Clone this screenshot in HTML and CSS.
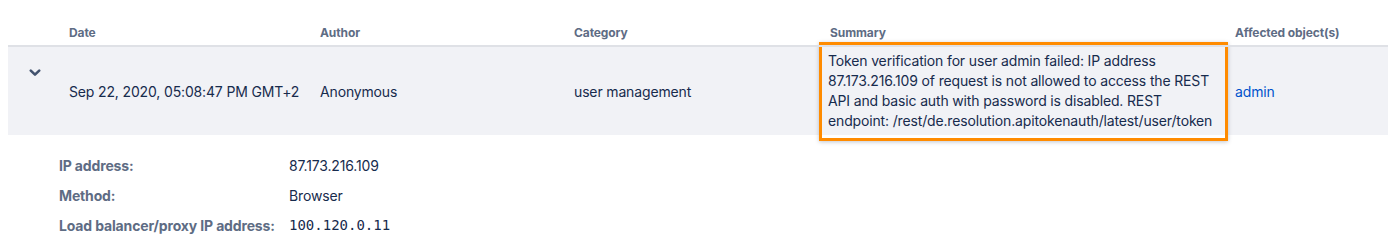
FILE: index.html
```html
<!DOCTYPE html>
<html lang="en">
<head>
  <meta charset="UTF-8" />
  <title>Audit log</title>
  <link rel="stylesheet" href="styles.css">
</head>
<body>
  <table class="audit-table">
    <colgroup>
      <col class="col-toggle">
      <col class="col-date">
      <col class="col-author">
      <col class="col-category">
      <col class="col-summary">
      <col class="col-objects">
    </colgroup>
    <thead>
      <tr>
        <th></th>
        <th>Date</th>
        <th>Author</th>
        <th>Category</th>
        <th>Summary</th>
        <th>Affected object(s)</th>
      </tr>
    </thead>
    <tbody>
      <tr class="entry">
        <td class="toggle">
          <svg width="12" height="8" viewBox="0 0 12 8" aria-hidden="true">
            <path d="M1.8 1.6 L6 5.6 L10.2 1.6" fill="none" stroke="#42526e" stroke-width="2.6" stroke-linecap="round" stroke-linejoin="round"/>
          </svg>
        </td>
        <td>Sep 22, 2020, 05:08:47 PM GMT+2</td>
        <td>Anonymous</td>
        <td>user management</td>
        <td class="summary">
          <div class="highlight">Token verification for user admin failed: IP address 87.173.216.109 of request is not allowed to access the REST API and basic auth with password is disabled. REST endpoint: /rest/de.resolution.apitokenauth/latest/user/token</div>
        </td>
        <td><a href="#" class="link">admin</a></td>
      </tr>
    </tbody>
  </table>

  <!-- expanded details of the entry -->
  <dl class="details">
    <dt>IP address:</dt>
    <dd>87.173.216.109</dd>
    <dt>Method:</dt>
    <dd>Browser</dd>
    <dt>Load balancer/proxy IP address:</dt>
    <dd class="mono">100.120.0.11</dd>
  </dl>
</body>
</html>
```

FILE: styles.css
```css
* { box-sizing: border-box; }
body {
  margin: 0;
  padding: 0 0 0 8px;
  font-family: Inter, 'Noto Sans', sans-serif;
  font-size: 14px;
  letter-spacing: -0.15px;
  color: #172b4d;
  background: #fff;
}

/* Table */
.audit-table {
  width: 100%;
  border-collapse: collapse;
  table-layout: fixed;
}
.col-toggle { width: 53px; }
.col-date { width: 251px; }
.col-author { width: 254px; }
.col-category { width: 256px; }
.col-summary { width: 405px; }
.audit-table th {
  text-align: left;
  font-size: 12px;
  font-weight: 700;
  line-height: 16px;
  letter-spacing: -0.1px;
  color: #5e6c84;
  padding: 25px 8px 4px;
  border-bottom: 2px solid #dfe1e6;
}
.audit-table td {
  padding: 4px 8px 3px;
  line-height: 20px;
  vertical-align: middle;
}
.entry { background: #f1f2f6; }
.entry td.toggle {
  vertical-align: top;
  padding: 22px 0 0 21px;
}
.toggle svg { display: block; }
.entry td.summary { padding-left: 6px; }
.highlight {
  width: 409px;
  margin: -9px;
  padding: 6px 6px 7px;
  border: 3px solid #ff8b00;
  box-shadow: 0 1px 4px rgba(9, 30, 66, 0.25);
}
.link {
  color: #0052cc;
  text-decoration: none;
}

/* Details */
.details {
  display: grid;
  grid-template-columns: 230px 1fr;
  grid-auto-rows: 30px;
  align-items: center;
  margin: 15px 0 0 51px;
}
.details dt {
  font-weight: 700;
  color: #5e6c84;
  white-space: nowrap;
}
.details dd { margin: 0; }
.details .mono {
  font-family: 'DejaVu Sans Mono', 'Liberation Mono', monospace;
  font-size: 14px;
  letter-spacing: 0;
}
```
